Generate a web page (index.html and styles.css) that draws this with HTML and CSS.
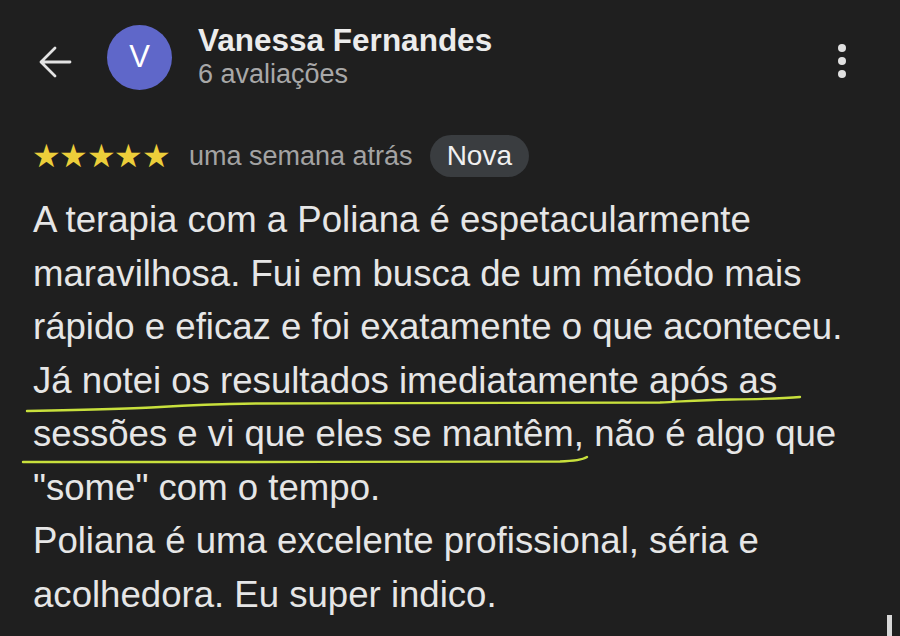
FILE: index.html
```html
<!DOCTYPE html>
<html lang="pt">
<head>
    <meta charset="UTF-8">
    <title>Avaliação</title>
    <link rel="stylesheet" href="styles.css">
</head>
<body>
    <div class="header">
        <div class="back">
            <svg width="34" height="34" viewBox="0 0 34 34">
                <path d="M32 17 H3 M17 3 L3 17 L17 31" fill="none" stroke="#e3e3e3" stroke-width="2.8" stroke-linecap="round" stroke-linejoin="round"/>
            </svg>
        </div>
        <div class="avatar">V</div>
        <div class="user">
            <div class="nome">Vanessa Fernandes</div>
            <div class="qtd">6 avaliações</div>
        </div>
        <div class="menu">
            <span></span><span></span><span></span>
        </div>
    </div>

    <div class="meta">
        <div class="estrelas">★★★★★</div>
        <div class="tempo">uma semana atrás</div>
        <div class="chip">Nova</div>
    </div>

    <div class="review">
        <p>A terapia com a Poliana é espetacularmente<br>
        maravilhosa. Fui em busca de um método mais<br>
        rápido e eficaz e foi exatamente o que aconteceu.<br>
        Já notei os resultados imediatamente após as<br>
        sessões e vi que eles se mantêm, não é algo que<br>
        "some" com o tempo.<br>
        Poliana é uma excelente profissional, séria e<br>
        acolhedora. Eu super indico.</p>
    </div>

    <!-- riscos a caneta por cima do texto -->
    <svg class="risco" width="900" height="636" viewBox="0 0 900 636">
        <path d="M27 411 C80 410 130 409 160 407 C190 405 210 404 260 403.5 C400 403 600 403 660 402.5 C690 401 700 400 730 399.5 C770 399 790 398 800 397" fill="none" stroke="#c8e03c" stroke-width="2.4" stroke-linecap="round"/>
        <path d="M23 462 C150 462 400 462 560 461.5 C575 461 582 460 587 457" fill="none" stroke="#c8e03c" stroke-width="2.4" stroke-linecap="round"/>
    </svg>

    <div class="barra"></div>
</body>
</html>
```

FILE: styles.css
```css
/* fundo escuro */
body {
    margin: 0;
    background-color: #1f1f1f;
    color: #e3e3e3;
    font-family: "Liberation Sans", Arial, sans-serif;
    width: 900px;
    height: 636px;
    overflow: hidden;
    position: relative;
}

/* cabecalho */
.header {
    display: flex;
    align-items: center;
    height: 115px;
    padding-left: 38px;
}

.back {
    width: 34px;
    height: 34px;
    margin-top: 8px;
}

.avatar {
    width: 65px;
    height: 65px;
    border-radius: 50%;
    background-color: #5f67c9;
    color: #fff;
    font-size: 31px;
    display: flex;
    align-items: center;
    justify-content: center;
    margin-left: 35px;
    margin-top: -1px;
}

.user {
    margin-left: 26px;
    flex: 1;
    margin-top: -4px;
}

.nome {
    font-size: 31.5px;
    font-weight: bold;
    color: #ececec;
}

.qtd {
    font-size: 27px;
    color: #a8a8a8;
    margin-top: 0;
}

.menu {
    display: flex;
    flex-direction: column;
    gap: 5px;
    margin-right: 54px;
    margin-top: 6px;
}

.menu span {
    width: 8px;
    height: 8px;
    border-radius: 50%;
    background-color: #e0e0e0;
}

/* estrelas e data */
.meta {
    display: flex;
    align-items: center;
    padding-left: 32px;
    margin-top: 20px;
    height: 42px;
}

.estrelas {
    font-size: 32px;
    color: #ecce3a;
    letter-spacing: -1.6px;
}

.tempo {
    font-size: 27px;
    color: #a3a3a3;
    margin-left: 20px;
}

.chip {
    margin-left: 17px;
    background-color: #3a3d40;
    border-radius: 21px;
    padding: 0 17px;
    height: 42px;
    line-height: 42px;
    font-size: 28px;
    color: #f0f0f0;
}

/* texto da avaliacao */
.review {
    padding-left: 33px;
    margin-top: 16px;
}

.review p {
    margin: 0;
    font-size: 36.6px;
    line-height: 53.5px;
    color: #e6e6e6;
}

.risco {
    position: absolute;
    left: 0;
    top: 0;
}

.barra {
    position: absolute;
    left: 887px;
    bottom: 0;
    width: 5px;
    height: 21px;
    background-color: #d8d8d8;
}
```
